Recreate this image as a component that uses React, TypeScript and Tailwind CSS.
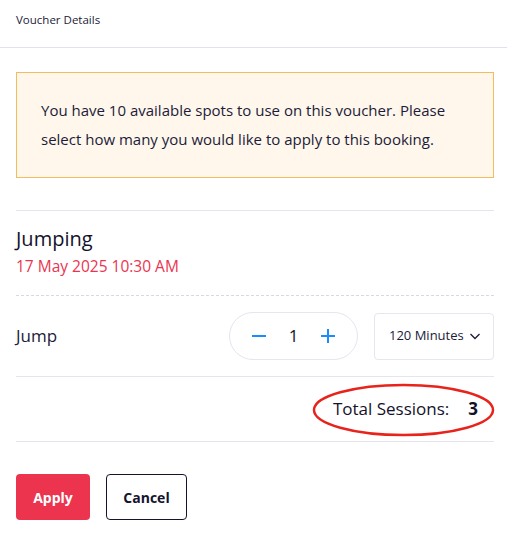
import React from "react";

export default function App() {
  return (
    <div className="w-[507px] h-[539px] bg-white text-[#1c1b3a] overflow-hidden" style={{ fontFamily: "'Open Sans', 'Noto Sans', sans-serif" }}>
      <div className="h-[48px] pl-4 flex items-center border-b border-[#e3e1ec]">
        <span className="text-[11.5px] -mt-[7px]">Voucher Details</span>
      </div>
      <div className="pl-4 pr-[13px]">
        <div className="mt-[24px] border border-[#f6bb5e] bg-[#fff7eb] px-[24px] py-[23px] text-[15px] leading-[29px]">
          You have 10 available spots to use on this voucher. Please select how many you would like to apply to this booking.
        </div>
        <div className="mt-[32px] h-px bg-[#e6e5ee]" />
        <div className="pt-[16px] pb-[18px] border-b border-dashed border-[#d9d7e6]">
          <div className="text-[20px] leading-[24px] font-medium text-[#13122b]">Jumping</div>
          <div className="text-[15.5px] leading-[22px] text-[#ea3450] mt-[4px]">17 May 2025 10:30 AM</div>
        </div>
        <div className="flex items-center py-[16px] border-b border-[#e6e5ee]">
          <span className="text-[17px] flex-1">Jump</span>
          <div className="w-[129px] h-[48px] rounded-full border border-[#e6e5f0] flex items-center justify-center gap-[22px]">
            <svg width="16" height="16" viewBox="0 0 16 16"><path d="M1 8h14" stroke="#1a8cff" strokeWidth="2" /></svg>
            <span className="text-[17px] text-[#13122b]">1</span>
            <svg width="16" height="16" viewBox="0 0 16 16"><path d="M1 8h14M8 1v14" stroke="#1a8cff" strokeWidth="2" /></svg>
          </div>
          <div className="ml-[16px] w-[120px] h-[47px] rounded-[4px] border border-[#e6e5f0] flex items-center justify-between pl-[14px] pr-[12px]">
            <span className="text-[13px]">120 Minutes</span>
            <svg width="12" height="12" viewBox="0 0 12 12"><path d="M1.5 4l4.5 4.5L10.5 4" fill="none" stroke="#1c1b3a" strokeWidth="1.3" /></svg>
          </div>
        </div>
        <div className="relative h-[65px] flex items-center justify-end pr-[16px] border-b border-[#e6e5ee]">
          <span className="text-[17px] text-[#13122b]">Total Sessions:</span>
          <span className="text-[17px] font-bold ml-[19px] text-[#13122b]">3</span>
          <svg className="absolute left-[296px] top-[6px]" width="183" height="54" viewBox="0 0 183 54">
            <ellipse cx="91.5" cy="27" rx="89.5" ry="25" fill="none" stroke="#e8231c" strokeWidth="2.5" />
          </svg>
        </div>
        <div className="mt-[32px] flex gap-[16px]">
          <button className="w-[74px] h-[46px] rounded-[4px] bg-[#ec344f] text-white text-[14px] font-bold">Apply</button>
          <button className="w-[81px] h-[46px] rounded-[4px] border border-[#15142e] text-[#15142e] text-[14px] font-bold">Cancel</button>
        </div>
      </div>
    </div>
  );
}
